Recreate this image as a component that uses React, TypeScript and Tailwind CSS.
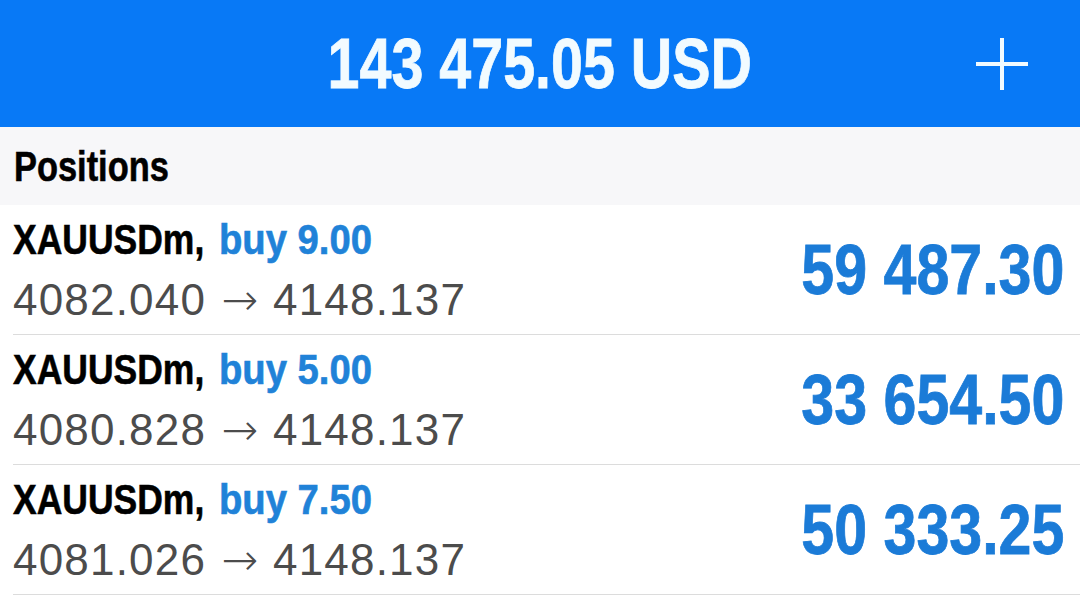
import React from 'react';

const positions = [
  { symbol: 'XAUUSDm,', side: 'buy 9.00', open: '4082.040', current: '4148.137', profit: '59 487.30' },
  { symbol: 'XAUUSDm,', side: 'buy 5.00', open: '4080.828', current: '4148.137', profit: '33 654.50' },
  { symbol: 'XAUUSDm,', side: 'buy 7.50', open: '4081.026', current: '4148.137', profit: '50 333.25' },
];

function PlusIcon() {
  return (
    <svg width="54" height="54" viewBox="0 0 54 54" fill="none">
      <path d="M27 1v52M1 27h52" stroke="#f2fbff" strokeWidth="4" />
    </svg>
  );
}

function PositionRow({ p }: { p: (typeof positions)[number] }) {
  return (
    <div className="ml-[13px] h-[130px] flex items-center justify-between border-b border-[#dcdcdc] pr-[16px]">
      <div className="flex flex-col gap-[17px] pt-[2px]">
        <div className="flex h-[42px] text-[42px] leading-none font-bold [-webkit-text-stroke:0.6px_currentColor]">
          <span className="w-[206px] shrink-0">
            <span className="inline-block origin-left scale-x-[0.845] text-black whitespace-nowrap">{p.symbol}</span>
          </span>
          <span className="inline-block origin-left scale-x-[0.91] text-[#2082d8] whitespace-nowrap">{p.side}</span>
        </div>
        <div className="flex items-center h-[44px] text-[44px] leading-none tracking-[1.2px] text-[#4c4c4c] whitespace-nowrap">
          <span>{p.open}</span>
          <span className="ml-[15px] mr-[15px] font-['DejaVu_Sans',sans-serif] font-extralight text-[44px] tracking-normal">→</span>
          <span>{p.current}</span>
        </div>
      </div>
      <span className="inline-block origin-right scale-x-[0.845] text-[70px] leading-none font-bold text-[#1b7bd7] whitespace-nowrap [-webkit-text-stroke:0.8px_currentColor]">
        {p.profit}
      </span>
    </div>
  );
}

export default function App() {
  return (
    <div className="w-[1080px] h-[608px] overflow-hidden bg-white font-['Liberation_Sans',Arial,sans-serif]">
      <header className="h-[127px] bg-[#0879f6] grid grid-cols-[1fr_auto_1fr] items-center">
        <div />
        <span className="inline-block scale-x-[0.82] text-[70px] leading-none font-bold text-[#f2fbff] whitespace-nowrap [-webkit-text-stroke:0.8px_currentColor]">
          143 475.05 USD
        </span>
        <div className="flex justify-end pr-[51px]">
          <PlusIcon />
        </div>
      </header>
      <div className="h-[78px] bg-[#f7f7f9] flex items-center pl-[14px]">
        <span className="inline-block origin-left scale-x-[0.8] text-[43px] leading-none font-bold text-black [-webkit-text-stroke:0.6px_currentColor]">
          Positions
        </span>
      </div>
      {positions.map((p, i) => (
        <PositionRow key={i} p={p} />
      ))}
    </div>
  );
}
